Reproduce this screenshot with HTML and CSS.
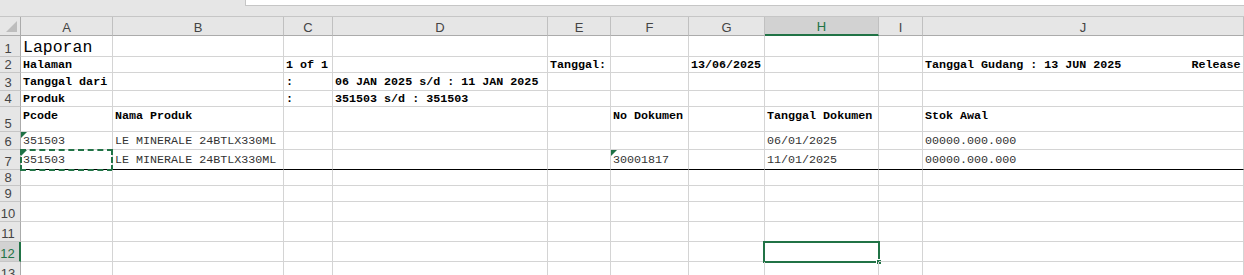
FILE: index.html
```html
<!DOCTYPE html>
<html lang="en">
<head>
  <meta charset="UTF-8">
  <meta name="viewport" content="width=device-width, initial-scale=1.0">
  <title>Laporan</title>
  <link rel="stylesheet" href="styles.css">
</head>
<body>
  <div class="topbar">
    <div class="formula"></div>
  </div>
  <div id="sheet" class="sheet"></div>

  <script>
    const columns = ['A', 'B', 'C', 'D', 'E', 'F', 'G', 'H', 'I', 'J'];

    const rows = [
      { cls: 'title', cells: { A: 'Laporan' } },
      { cls: 'bold', cells: { A: 'Halaman', C: '1 of 1', E: 'Tanggal:', G: '13/06/2025', J: 'Tanggal Gudang : 13 JUN 2025          Release' } },
      { cls: 'bold', cells: { A: 'Tanggal dari', C: ':', D: '06 JAN 2025 s/d : 11 JAN 2025' } },
      { cls: 'bold', cells: { A: 'Produk', C: ':', D: '351503 s/d : 351503' } },
      { cls: 'bold head', cells: { A: 'Pcode', B: 'Nama Produk', F: 'No Dokumen', H: 'Tanggal Dokumen', J: 'Stok Awal' } },
      { cls: 'data', cells: { A: '351503', B: 'LE MINERALE 24BTLX330ML', H: '06/01/2025', J: '00000.000.000' } },
      { cls: 'data last', cells: { A: '351503', B: 'LE MINERALE 24BTLX330ML', F: '30001817', H: '11/01/2025', J: '00000.000.000' } },
      { cls: '', cells: {} },
      { cls: '', cells: {} },
      { cls: '', cells: {} },
      { cls: '', cells: {} },
      { cls: '', cells: {} },
      { cls: '', cells: {} }
    ];

    // cell markers: error triangles, copy marquee, active cell
    const marks = { A6: 'flag', A7: 'flag copy', F7: 'flag', H12: 'active' };
    const activeCol = 'H';
    const activeRow = 12;

    const sheet = document.getElementById('sheet');

    function addCell(className, text) {
      const cell = document.createElement('div');
      cell.className = className;
      if (text) cell.textContent = text;
      sheet.appendChild(cell);
      return cell;
    }

    addCell('corner');
    columns.forEach(col => {
      addCell('col-head' + (col === activeCol ? ' selected' : ''), col);
    });

    rows.forEach((row, i) => {
      const num = i + 1;
      addCell('row-head' + (num === activeRow ? ' selected' : ''), String(num));
      columns.forEach(col => {
        const mark = marks[col + num] || '';
        const cell = addCell(('cell ' + row.cls + ' ' + mark).trim(), row.cells[col]);
        if (mark === 'active') {
          const box = document.createElement('div');
          box.className = 'active-box';
          box.innerHTML = '<span class="handle"></span>';
          cell.appendChild(box);
        }
      });
    });
  </script>
</body>
</html>
```

FILE: styles.css
```css
body {
  margin: 0;
  background-color: #fff;
  font-family: "Liberation Mono", "Courier New", monospace;
  overflow: hidden;
}

.topbar {
  height: 16px;
  background-color: #e6e6e6;
  border-bottom: 1px solid #c6c6c6;
  display: flex;
}

.formula {
  margin-left: 245px;
  flex: 1;
  height: 5px;
  background-color: #fff;
  border-left: 1px solid #c6c6c6;
  border-bottom: 1px solid #c6c6c6;
}

.sheet {
  display: grid;
  grid-template-columns: 21px 92px 171px 49px 215px 63px 78px 76px 114px 44px 1fr;
  grid-template-rows: 19px 21px 16px 18px 16px 25px 18px 20px 16px 16px 20px 20px 20px 20px;
}

.corner,
.col-head,
.row-head {
  box-sizing: border-box;
  background-color: #e6e6e6;
  font-family: "Liberation Sans", Arial, sans-serif;
  font-size: 13px;
  color: #444;
  display: flex;
  justify-content: center;
}

.corner {
  position: relative;
  border-right: 1px solid #ababab;
  border-bottom: 1px solid #ababab;
}

.corner::after {
  content: '';
  position: absolute;
  right: 3px;
  bottom: 3px;
  border-left: 11px solid transparent;
  border-bottom: 11px solid #bdbdbd;
}

.col-head {
  align-items: center;
  padding-top: 2px;
  border-right: 1px solid #c0c0c0;
  border-bottom: 1px solid #ababab;
}

.col-head.selected {
  background-color: #d2d2d2;
  color: #217346;
  border-bottom: 2px solid #217346;
}

.row-head {
  align-items: flex-end;
  padding-right: 4px;
  border-right: 1px solid #ababab;
  border-bottom: 1px solid #c6c6c6;
}

.row-head.selected {
  background-color: #d2d2d2;
  color: #217346;
  border-right: 2px solid #217346;
}

.cell {
  box-sizing: border-box;
  position: relative;
  border-right: 1px solid #d4d4d4;
  border-bottom: 1px solid #d4d4d4;
  padding: 0 2px;
  display: flex;
  align-items: center;
  font-size: 11.7px;
  white-space: pre;
  color: #000;
}

.title {
  font-size: 16.5px;
  padding-top: 2px;
}

.bold {
  font-weight: bold;
}

.head {
  align-items: flex-start;
  padding-top: 2px;
}

.data {
  color: #333;
}

.last {
  border-bottom-color: #000;
}

.flag::before {
  content: '';
  position: absolute;
  top: 0;
  left: 0;
  border-top: 6px solid #1e7145;
  border-right: 6px solid transparent;
}

.copy::after {
  content: '';
  position: absolute;
  top: -1px;
  left: -1px;
  right: -1px;
  bottom: -2px;
  border: 2px dashed #217346;
}

.active-box {
  position: absolute;
  top: -1px;
  left: -2px;
  right: -2px;
  bottom: -2px;
  border: 2px solid #217346;
}

.handle {
  position: absolute;
  right: -4px;
  bottom: -4px;
  width: 4px;
  height: 4px;
  background-color: #217346;
  border: 1px solid #fff;
}
```
